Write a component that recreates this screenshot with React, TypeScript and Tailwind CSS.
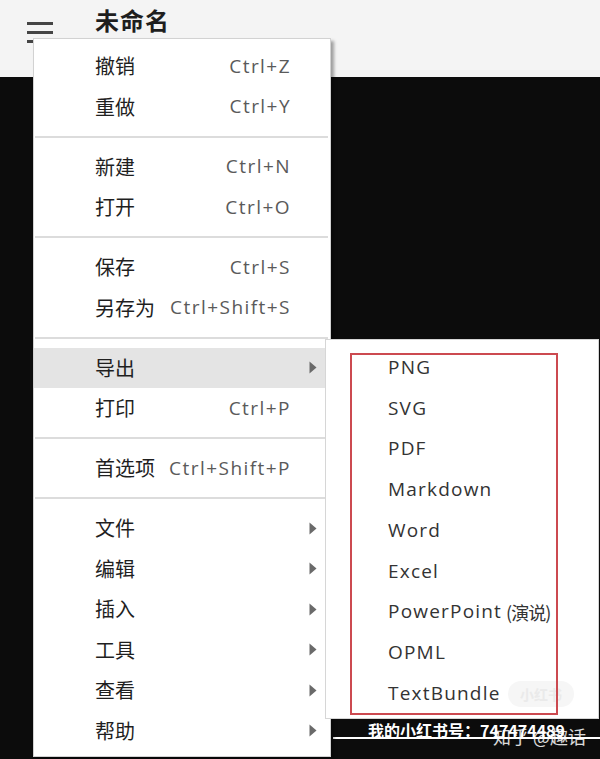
import React from "react";

type Item =
  | { type: "item"; label: string; shortcut?: string; sub?: boolean; active?: boolean }
  | { type: "sep" };

const items: Item[] = [
  { type: "item", label: "撤销", shortcut: "Ctrl+Z" },
  { type: "item", label: "重做", shortcut: "Ctrl+Y" },
  { type: "sep" },
  { type: "item", label: "新建", shortcut: "Ctrl+N" },
  { type: "item", label: "打开", shortcut: "Ctrl+O" },
  { type: "sep" },
  { type: "item", label: "保存", shortcut: "Ctrl+S" },
  { type: "item", label: "另存为", shortcut: "Ctrl+Shift+S" },
  { type: "sep" },
  { type: "item", label: "导出", sub: true, active: true },
  { type: "item", label: "打印", shortcut: "Ctrl+P" },
  { type: "sep" },
  { type: "item", label: "首选项", shortcut: "Ctrl+Shift+P" },
  { type: "sep" },
  { type: "item", label: "文件", sub: true },
  { type: "item", label: "编辑", sub: true },
  { type: "item", label: "插入", sub: true },
  { type: "item", label: "工具", sub: true },
  { type: "item", label: "查看", sub: true },
  { type: "item", label: "帮助", sub: true },
];

const exportItems = ["PNG", "SVG", "PDF", "Markdown", "Word", "Excel", "PowerPoint", "OPML", "TextBundle"];

const cjk = "font-['Noto_Sans_CJK_SC','Noto_Sans',sans-serif]";
const latin = "font-['Open_Sans','Noto_Sans_CJK_SC',sans-serif]";

function Arrow() {
  return (
    <svg width="8" height="13" viewBox="0 0 8 13" className="block">
      <path d="M0.5 0.5 L7.5 6.5 L0.5 12.5 Z" fill="#6a6a6a" />
    </svg>
  );
}

export default function App() {
  return (
    <div className="relative w-[600px] h-[759px] overflow-hidden bg-[#0c0c0c]">
      {/* top bar */}
      <div className="h-[77px] bg-[#f4f4f4] flex items-start">
        <div className="ml-[27px] mt-[22px] flex flex-col gap-[6px]">
          <div className="w-[26px] h-[3px] bg-[#454545]" />
          <div className="w-[26px] h-[3px] bg-[#454545]" />
          <div className="w-[26px] h-[3px] bg-[#454545]" />
        </div>
        <div className={`ml-[42px] mt-[4px] text-[24px] tracking-[1px] leading-[32px] font-bold text-[#1e1e1e] ${cjk}`}>未命名</div>
      </div>

      {/* bottom watermark text */}
      <div className="absolute left-[333px] top-[719px] w-[267px] h-[40px]">
        <div className={`absolute left-[35px] top-[1px] text-[16px] leading-[20px] font-bold text-white whitespace-nowrap ${cjk}`}>
          我的小红书号：747474489
        </div>
        <div className="absolute left-0 top-[18px] w-[267px] h-[2px] bg-white" />
        <div className={`absolute left-[160px] top-[6px] text-[18px] leading-[22px] text-white/85 whitespace-nowrap ${cjk}`}>
          知乎 @趣话
        </div>
      </div>

      {/* main menu */}
      <div className="absolute left-[33px] top-[38px] w-[298px] h-[719px] bg-white border border-[#d2d2d2] shadow-[3px_3px_3px_rgba(0,0,0,0.35)] pt-[7px]">
        {items.map((it, i) =>
          it.type === "sep" ? (
            <div key={i} className="h-[19.5px] flex items-center pl-[1px] pr-[2px]">
              <div className="h-[2px] w-full bg-[#dcdcdc]" />
            </div>
          ) : (
            <div
              key={i}
              className={`h-[40.5px] flex items-center pl-[61px] ${it.active ? "bg-[#e4e4e4]" : ""}`}
            >
              <span className={`flex-1 text-[20px] leading-none text-[#1f1f1f] ${cjk}`}>{it.label}</span>
              {it.shortcut && (
                <span className={`text-[19px] tracking-[1.45px] -mr-[1px] leading-none text-[#5a5a5a] whitespace-nowrap ${latin}`}>{it.shortcut}</span>
              )}
              <span className="w-[40px] flex items-center pl-[19px]">{it.sub && <Arrow />}</span>
            </div>
          )
        )}
      </div>

      {/* export submenu */}
      <div className="absolute left-[325px] top-[339px] w-[274px] h-[380px] bg-white border border-[#d6d6d6] pt-[7px]">
        {exportItems.map((t) => (
          <div key={t} className={`h-[40.75px] flex items-center pl-[62px] text-[19px] tracking-[1.2px] leading-none text-[#333] whitespace-nowrap ${latin}`}>
            {t}
            {t === "PowerPoint" && (
              <span className={`ml-[4px] tracking-[-1px] text-[18px] ${cjk}`}>(演说)</span>
            )}
          </div>
        ))}
      </div>

      {/* faint watermark pill */}
      <div className={`absolute left-[508px] top-[681px] w-[66px] h-[26px] rounded-full bg-[#f6f6f6] flex items-center justify-center text-[14px] font-bold text-[#eaeaea] ${cjk}`}>
        小红书
      </div>

      {/* red annotation box */}
      <div className="absolute left-[350px] top-[353px] w-[208px] h-[362px] border-2 border-[#cc4a50]" />
    </div>
  );
}
